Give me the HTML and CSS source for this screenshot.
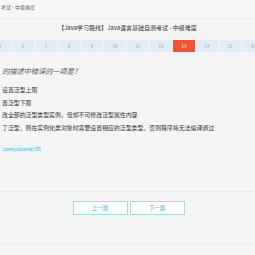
FILE: index.html
```html
<!DOCTYPE html>
<html lang="zh-CN">
<head>
<meta charset="utf-8">
<title>考试 - 中级难度</title>
<link rel="stylesheet" href="styles.css">
</head>
<body>
<div class="page">
  <header class="topbar"><span class="crumb">考试 - 中级难度</span></header>
  <h1 class="title">【Java学习路线】Java语言基础自测考试 - 中级难度</h1>
  <nav class="pager">
    <span class="cell">5</span>
    <span class="cell">6</span>
    <span class="cell">7</span>
    <span class="cell">8</span>
    <span class="cell">9</span>
    <span class="cell">10</span>
    <span class="cell">11</span>
    <span class="cell">12</span>
    <span class="cell active">13</span>
    <span class="cell">14</span>
    <span class="cell">15</span>
    <span class="cell">16</span>
  </nav>
  <section class="question">
    <p class="q-text">的描述中错误的一项是?</p>
    <ul class="options">
      <li>设置泛型上限</li>
      <li>置泛型下限</li>
      <li>改全部的泛型类型实例，但却不可修改泛型属性内容</li>
      <li>了泛型，则在实例化类对象时需要设置相应的泛型类型，否则程序将无法编译通过</li>
    </ul>
    <a class="source" href="#">.com/course/35</a>
  </section>
  <footer class="actions">
    <button class="btn">上一题</button>
    <button class="btn">下一题</button>
  </footer>
</div>
</body>
</html>
```

FILE: styles.css
```css
html, body {
  margin: 0;
  padding: 0;
  background: #f5f5f5;
}
body {
  width: 255px;
  height: 255px;
  overflow: hidden;
  font-family: "Noto Sans CJK SC", "Noto Sans", sans-serif;
  color: #333;
}
.page {
  display: flex;
  flex-direction: column;
}
.topbar {
  height: 19px;
  border-bottom: 1px solid #e9e9e9;
  background: #f7f7f7;
  display: flex;
  align-items: center;
  padding-bottom: 5px;
  box-sizing: border-box;
}
.crumb {
  font-size: 5px;
  color: #666;
  margin-left: 1px;
}
.title {
  margin: 0;
  padding: 5px 0 8px;
  font-size: 6px;
  line-height: 8px;
  font-weight: normal;
  text-align: center;
  color: #333;
}
.pager {
  display: flex;
  gap: 1px;
  height: 12px;
  margin-left: -11px;
  background: #f1f5fa;
}
.cell {
  flex: 0 0 22px;
  background: #e4edf7;
  color: #959fab;
  font-size: 4.5px;
  display: flex;
  align-items: center;
  justify-content: center;
}
.cell.active {
  background: #ef5532;
  color: #fff;
}
.question {
  display: flex;
  flex-direction: column;
  align-items: flex-start;
  padding-left: 2px;
}
.q-text {
  margin: 14px 0 0;
  font-size: 7.2px;
  line-height: 10px;
  font-style: italic;
  color: #555;
}
.options {
  list-style: none;
  margin: 8px 0 0;
  padding: 0;
}
.options li {
  font-size: 5.9px;
  line-height: 12.6px;
  color: #333;
}
.source {
  margin-top: 11px;
  font-size: 5.4px;
  line-height: 8px;
  color: #3fb3c5;
  background: #e6f6f8;
  text-decoration: none;
}
.actions {
  margin-top: 38px;
  height: 54px;
  border-top: 1px solid #e9e9e9;
  border-bottom: 1px solid #e9e9e9;
  display: flex;
  justify-content: center;
  align-items: flex-start;
  gap: 2px;
  padding-top: 9px;
  padding-left: 2px;
  box-sizing: border-box;
}
.btn {
  width: 55px;
  height: 14px;
  border: 1px solid #a6dae1;
  background: #fdfefe;
  color: #3fb3c5;
  font-family: "Noto Sans CJK SC", sans-serif;
  font-size: 5.4px;
  padding: 0;
  margin: 0;
}
```
